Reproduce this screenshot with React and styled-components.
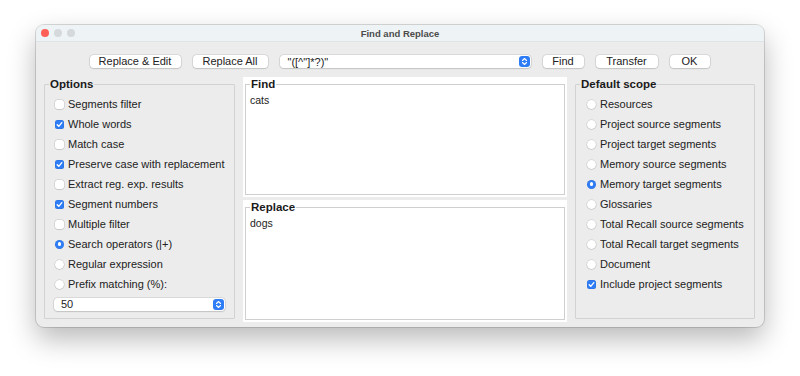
import React from "react";
import styled, { createGlobalStyle } from "styled-components";

const GlobalStyle = createGlobalStyle`
  html, body {
    margin: 0;
    padding: 0;
    background: #ffffff;
  }
  body {
    font-family: "Liberation Sans", Arial, sans-serif;
    font-size: 11px;
    color: #222;
  }
`;

const Page = styled.div`
  width: 800px;
  height: 376px;
  padding: 25px 0 0 36px;
  box-sizing: border-box;
  overflow: hidden;
`;

const Window = styled.div`
  width: 728px;
  height: 302px;
  background: #ececec;
  border-radius: 8px;
  box-shadow: 0 0 0 1px rgba(0, 0, 0, 0.14), 0 12px 28px rgba(0, 0, 0, 0.28);
  display: flex;
  flex-direction: column;
  overflow: hidden;
`;

const TitleBar = styled.div`
  height: 17px;
  flex: none;
  background: #eef3f5;
  border-bottom: 1px solid #e0e4e6;
  display: grid;
  grid-template-columns: 60px 1fr 60px;
  align-items: center;
  box-sizing: border-box;
`;

const Lights = styled.div`
  display: flex;
  gap: 5px;
  padding-left: 5px;
`;

const Light = styled.span`
  width: 8px;
  height: 8px;
  border-radius: 50%;
  background: ${(p) => p.$color};
`;

const Title = styled.div`
  text-align: center;
  font-size: 9.5px;
  font-weight: bold;
  color: #4c4c4c;
`;

const Body = styled.div`
  flex: 1;
  display: flex;
  flex-direction: column;
  padding: 0 9px 5px 8px;
`;

const Toolbar = styled.div`
  height: 35px;
  display: flex;
  align-items: center;
  justify-content: center;
  gap: 12px;
  padding-top: 4px;
  box-sizing: border-box;
`;

const Button = styled.button`
  height: 13px;
  width: ${(p) => p.$w}px;
  padding: 0;
  border: none;
  border-radius: 3.5px;
  background: #ffffff;
  box-shadow: 0 0 0 0.5px rgba(0, 0, 0, 0.12), 0 0.5px 1.5px rgba(0, 0, 0, 0.2);
  font-family: inherit;
  font-size: 11px;
  color: #222;
  line-height: 13px;
`;

const Combo = styled.div`
  width: ${(p) => p.$w}px;
  height: 13px;
  background: #ffffff;
  border-radius: 3.5px;
  box-shadow: 0 0 0 0.5px rgba(0, 0, 0, 0.12), 0 0.5px 1.5px rgba(0, 0, 0, 0.2);
  display: flex;
  align-items: center;
  justify-content: space-between;
  padding: 0 1px 0 ${(p) => p.$pad}px;
  box-sizing: border-box;
  font-size: 11px;
  color: #222;
`;

const ComboArrow = styled.span`
  width: 11px;
  height: 11px;
  border-radius: 3px;
  background: #2f7df6;
  display: flex;
  align-items: center;
  justify-content: center;
`;

const Columns = styled.div`
  flex: 1;
  display: grid;
  grid-template-columns: 191px 324px 180px;
  gap: 8px;
`;

const Group = styled.fieldset`
  margin: 0 0 3px 0;
  padding: 3px 0 0 2px;
  border: 1px solid #d2d2d2;
  border-radius: 1px;
  min-width: 0;
  display: flex;
  flex-direction: column;
`;

const Legend = styled.legend`
  padding: 0 1px;
  margin-left: 2px;
  font-weight: bold;
  font-size: 11.5px;
  line-height: 14px;
  color: #1a1a1a;
`;

const Rows = styled.div`
  display: flex;
  flex-direction: column;
  padding-left: ${(p) => p.$indent}px;
`;

const Row = styled.div`
  height: 20px;
  display: flex;
  align-items: center;
  gap: 4px;
  white-space: nowrap;
`;

const Box = styled.span`
  width: 9px;
  height: 9px;
  flex: none;
  border-radius: ${(p) => (p.$round ? "50%" : "2.5px")};
  background: ${(p) => (p.$on ? "#2f7df6" : "#ffffff")};
  box-shadow: ${(p) =>
    p.$on
      ? "inset 0 0 0 0.5px rgba(0,0,0,0.1)"
      : "0 0 0 0.5px rgba(0,0,0,0.15), 0 0.5px 1px rgba(0,0,0,0.15)"};
  display: flex;
  align-items: center;
  justify-content: center;
`;

const Dot = styled.span`
  width: 3.5px;
  height: 3.5px;
  border-radius: 50%;
  background: #ffffff;
`;

const ComboRow = styled.div`
  height: 20px;
  display: flex;
  align-items: center;
  margin-left: -1px;
`;

const Middle = styled.div`
  display: flex;
  flex-direction: column;
  gap: 3px;
`;

const TextPane = styled.div`
  flex: ${(p) => p.$grow};
  background: #ffffff;
  padding: 0 2px 2px 2px;
  display: flex;
`;

const PaneGroup = styled.fieldset`
  flex: 1;
  margin: 0;
  padding: 2px 4px 1px 2px;
  border: 1px solid #cfcfcf;
  min-width: 0;
`;

const PaneText = styled.div`
  font-size: 10.5px;
  line-height: 14px;
  color: #222;
  padding-left: 2px;
`;

function Check({ on, round, label }) {
  return (
    <Row>
      <Box $on={on} $round={round}>
        {on && !round && (
          <svg width="7" height="7" viewBox="0 0 7 7">
            <path d="M1.2 3.7 L2.8 5.3 L5.8 1.6" fill="none" stroke="#fff" strokeWidth="1.3" strokeLinecap="round" strokeLinejoin="round" />
          </svg>
        )}
        {on && round && <Dot />}
      </Box>
      {label}
    </Row>
  );
}

function Arrow() {
  return (
    <ComboArrow>
      <svg width="7" height="9" viewBox="0 0 7 9">
        <path d="M1.5 3.5 L3.5 1.5 L5.5 3.5 M1.5 5.5 L3.5 7.5 L5.5 5.5" fill="none" stroke="#fff" strokeWidth="1.1" strokeLinecap="round" strokeLinejoin="round" />
      </svg>
    </ComboArrow>
  );
}

const options = [
  { label: "Segments filter", on: false },
  { label: "Whole words", on: true },
  { label: "Match case", on: false },
  { label: "Preserve case with replacement", on: true },
  { label: "Extract reg. exp. results", on: false },
  { label: "Segment numbers", on: true },
  { label: "Multiple filter", on: false },
  { label: "Search operators (|+)", on: true, round: true },
  { label: "Regular expression", on: false, round: true },
  { label: "Prefix matching (%):", on: false, round: true },
];

const scopes = [
  { label: "Resources", on: false, round: true },
  { label: "Project source segments", on: false, round: true },
  { label: "Project target segments", on: false, round: true },
  { label: "Memory source segments", on: false, round: true },
  { label: "Memory target segments", on: true, round: true },
  { label: "Glossaries", on: false, round: true },
  { label: "Total Recall source segments", on: false, round: true },
  { label: "Total Recall target segments", on: false, round: true },
  { label: "Document", on: false, round: true },
  { label: "Include project segments", on: true },
];

export default function App() {
  return (
    <Page>
      <GlobalStyle />
      <Window>
        <TitleBar>
          <Lights>
            <Light $color="#fe5f57" />
            <Light $color="#d6d9db" />
            <Light $color="#d6d9db" />
          </Lights>
          <Title>Find and Replace</Title>
          <span />
        </TitleBar>
        <Body>
          <Toolbar>
            <Button $w={91}>Replace &amp; Edit</Button>
            <Button $w={75}>Replace All</Button>
            <Combo $w={251} $pad={8}>
              <span>"([^"]*?)"</span>
              <Arrow />
            </Combo>
            <Button $w={41}>Find</Button>
            <Button $w={62}>Transfer</Button>
            <Button $w={40}>OK</Button>
          </Toolbar>
          <Columns>
            <Group>
              <Legend>Options</Legend>
              <Rows $indent={8}>
                {options.map((o) => (
                  <Check key={o.label} {...o} />
                ))}
                <ComboRow>
                  <Combo $w={171} $pad={7}>
                    <span>50</span>
                    <Arrow />
                  </Combo>
                </ComboRow>
              </Rows>
            </Group>
            <Middle>
              <TextPane $grow={120}>
                <PaneGroup>
                  <Legend>Find</Legend>
                  <PaneText>cats</PaneText>
                </PaneGroup>
              </TextPane>
              <TextPane $grow={122}>
                <PaneGroup>
                  <Legend>Replace</Legend>
                  <PaneText>dogs</PaneText>
                </PaneGroup>
              </TextPane>
            </Middle>
            <Group>
              <Legend>Default scope</Legend>
              <Rows $indent={9}>
                {scopes.map((o) => (
                  <Check key={o.label} {...o} />
                ))}
              </Rows>
            </Group>
          </Columns>
        </Body>
      </Window>
    </Page>
  );
}
